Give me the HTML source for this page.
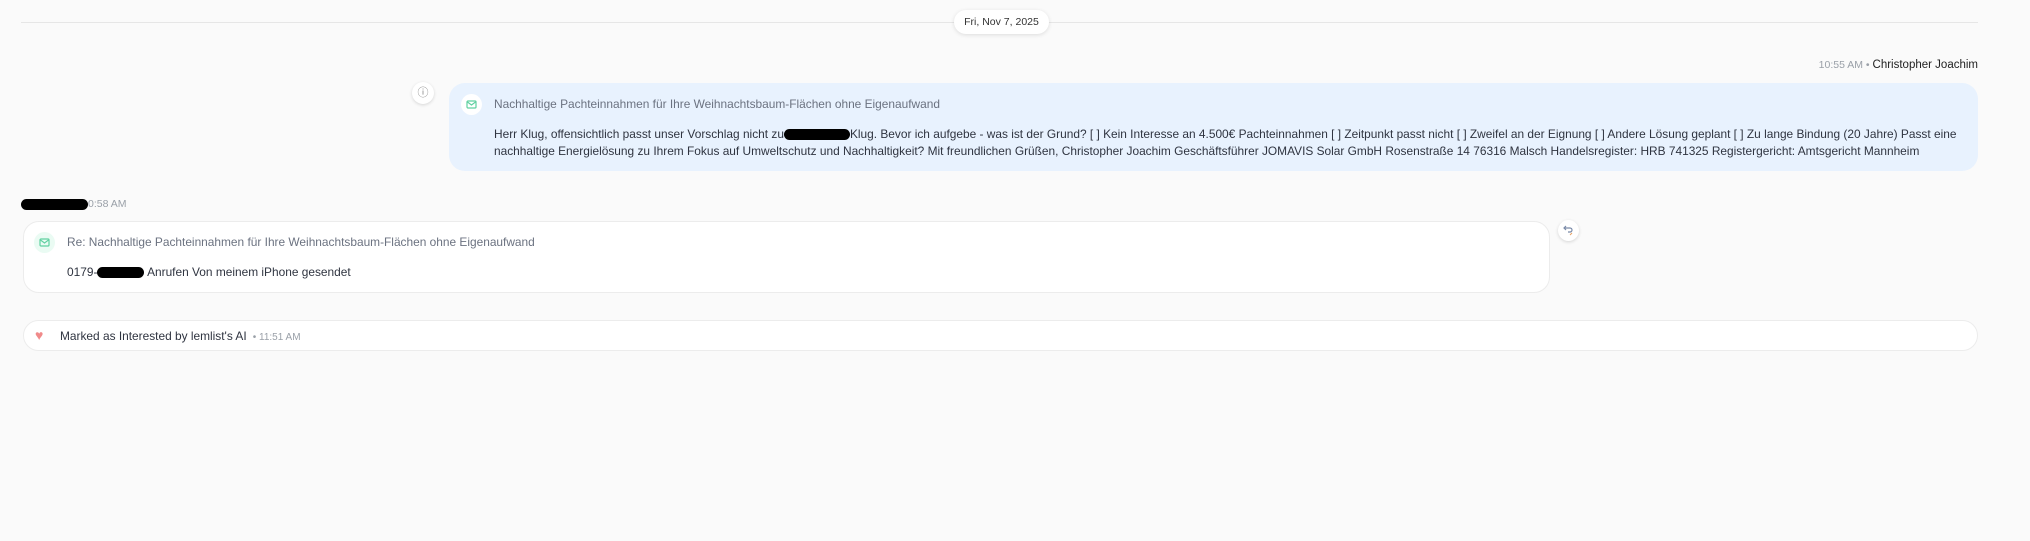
<!DOCTYPE html>
<html><head><meta charset="utf-8"><style>
*{margin:0;padding:0;box-sizing:border-box}
body{width:2030px;height:541px;background:#fafafa;font-family:"Liberation Sans",sans-serif;position:relative;overflow:hidden;color:#2a2f3a}
.abs{position:absolute}
.line{left:21px;top:22px;width:1957px;height:1px;background:#e6e6e6}
.pill{left:954px;top:10px;width:95px;height:24px;background:#fff;border-radius:12px;box-shadow:0 1px 4px rgba(0,0,0,.12);font-size:10.5px;text-align:center;line-height:24px;color:#333}
.nw{white-space:nowrap}
.red{display:inline-block;background:#000;border-radius:8px;vertical-align:middle}
.circ{border-radius:50%;background:#fff;box-shadow:0 1px 3px rgba(0,0,0,.15)}
</style></head><body>
<div class="abs line"></div>
<div class="abs pill">Fri, Nov 7, 2025</div>

<div class="abs nw" style="right:52px;top:59px;font-size:10.5px;color:#9aa0a8">10:55 AM • <span style="color:#222;font-size:11.5px">Christopher Joachim</span></div>

<div class="abs circ" style="left:412px;top:82px;width:22px;height:22px;text-align:center;line-height:22px;font-size:11px;color:#888">ⓘ</div>

<div class="abs" style="left:449px;top:83px;width:1529px;height:88px;background:#e8f2fe;border-radius:16px"></div>
<div class="abs" style="left:461px;top:94px;width:21px;height:21px;border-radius:50%;background:#fff"></div>
<svg class="abs" style="left:466px;top:99px" width="11" height="11" viewBox="0 0 11 11"><rect x="1" y="2" width="9" height="7" rx="1" fill="none" stroke="#5fd0a0" stroke-width="1.2"/><path d="M1.5 3l4 3 4-3" fill="none" stroke="#5fd0a0" stroke-width="1.1"/></svg>
<div class="abs nw" style="left:494px;top:97px;font-size:11.9px;color:#6b7280">Nachhaltige Pachteinnahmen für Ihre Weihnachtsbaum-Flächen ohne Eigenaufwand</div>
<div class="abs nw" style="left:494px;top:126px;font-size:11.9px;line-height:17px;color:#2f3440">Herr Klug, offensichtlich passt unser Vorschlag nicht zu<span class="red" style="width:66px;height:11px"></span>Klug. Bevor ich aufgebe - was ist der Grund? [ ] Kein Interesse an 4.500€ Pachteinnahmen [ ] Zeitpunkt passt nicht [ ] Zweifel an der Eignung [ ] Andere Lösung geplant [ ] Zu lange Bindung (20 Jahre) Passt eine<br>nachhaltige Energielösung zu Ihrem Fokus auf Umweltschutz und Nachhaltigkeit? Mit freundlichen Grüßen, Christopher Joachim Geschäftsführer JOMAVIS Solar GmbH Rosenstraße 14 76316 Malsch Handelsregister: HRB 741325 Registergericht: Amtsgericht Mannheim</div>

<div class="abs nw" style="left:21px;top:198px;font-size:10.5px;color:#9aa0a8"><span class="red" style="width:67px;height:11px"></span>0:58 AM</div>

<div class="abs" style="left:23px;top:221px;width:1527px;height:72px;background:#fff;border:1px solid #ececec;border-radius:16px"></div>
<div class="abs" style="left:34px;top:232px;width:21px;height:21px;border-radius:50%;background:#eafbf3"></div>
<svg class="abs" style="left:39px;top:237px" width="11" height="11" viewBox="0 0 11 11"><rect x="1" y="2" width="9" height="7" rx="1" fill="none" stroke="#5fd0a0" stroke-width="1.2"/><path d="M1.5 3l4 3 4-3" fill="none" stroke="#5fd0a0" stroke-width="1.1"/></svg>
<div class="abs nw" style="left:67px;top:235px;font-size:11.9px;color:#6b7280">Re: Nachhaltige Pachteinnahmen für Ihre Weihnachtsbaum-Flächen ohne Eigenaufwand</div>
<div class="abs nw" style="left:67px;top:265px;font-size:11.9px;color:#2f3440">0179-<span class="red" style="width:47px;height:11px"></span> Anrufen Von meinem iPhone gesendet</div>

<div class="abs circ" style="left:1558px;top:220px;width:21px;height:21px"></div>
<svg class="abs" style="left:1563px;top:225px" width="11" height="11" viewBox="0 0 11 11"><path d="M3 1L1 3l2 2M1 3h6a2 2 0 010 4H5" fill="none" stroke="#7a8aa8" stroke-width="1.2"/><path d="M7 10l2-2" stroke="#e8a060" stroke-width="1"/></svg>

<div class="abs" style="left:23px;top:320px;width:1955px;height:31px;background:#fff;border:1px solid #ececec;border-radius:16px"></div>
<div class="abs" style="left:35px;top:327px;font-size:14px;color:#f08a8a">♥</div>
<div class="abs nw" style="left:60px;top:329px;font-size:11.9px;color:#2f3440">Marked as Interested by lemlist's AI <span style="color:#9aa0a8;font-size:10px">&nbsp;• 11:51 AM</span></div>
</body></html>
